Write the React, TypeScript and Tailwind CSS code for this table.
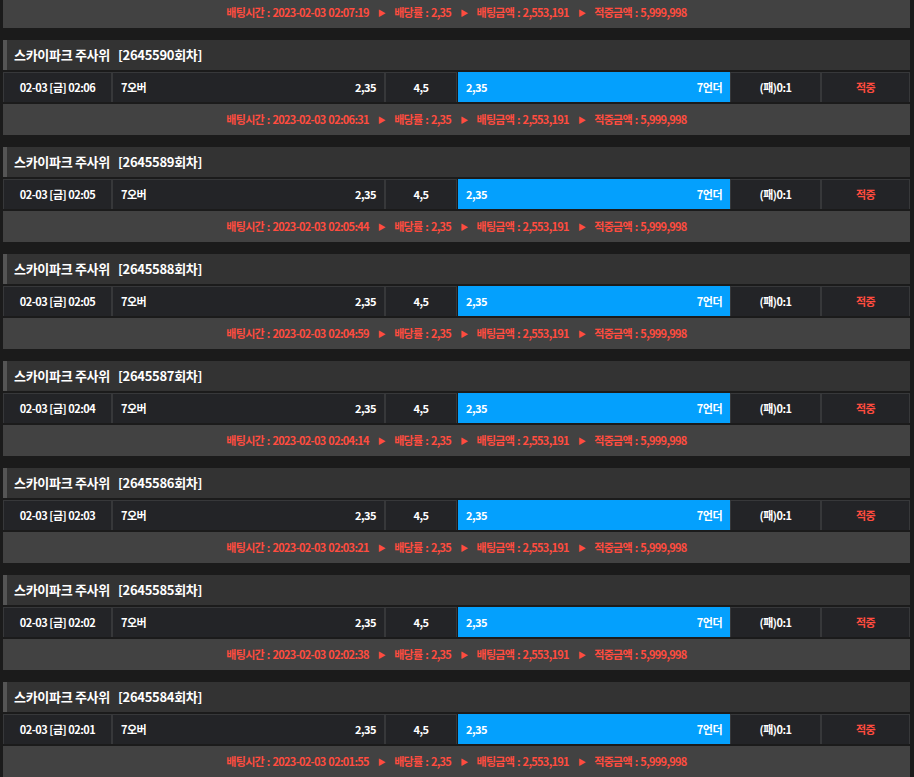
const rounds = [
  { no: "2645590", time: "02:06", bet: "02:06:31" },
  { no: "2645589", time: "02:05", bet: "02:05:44" },
  { no: "2645588", time: "02:05", bet: "02:04:59" },
  { no: "2645587", time: "02:04", bet: "02:04:14" },
  { no: "2645586", time: "02:03", bet: "02:03:21" },
  { no: "2645585", time: "02:02", bet: "02:02:38" },
  { no: "2645584", time: "02:01", bet: "02:01:55" },
]

function BetInfo({ bet, cut }: { bet: string; cut?: boolean }) {
  return (
    <div
      className={`flex items-center justify-center gap-[9px] bg-[#424242] text-[11px] font-bold tracking-[-0.7px] [word-spacing:1px] text-[#ff4c3f] ${
        cut ? "h-[28px] pb-[3px]" : "h-[31px]"
      }`}
    >
      <span>배팅시간 : 2023-02-03 {bet}</span>
      <span className="text-[8px]">▶</span>
      <span>배당률 : 2,35</span>
      <span className="text-[8px]">▶</span>
      <span>배팅금액 : 2,553,191</span>
      <span className="text-[8px]">▶</span>
      <span>적중금액 : 5,999,998</span>
    </div>
  )
}

function Round({ no, time, bet }: { no: string; time: string; bet: string }) {
  return (
    <div className="mt-[12px] flex flex-col gap-[2px]">
      <div className="flex h-[30px] items-center border-l-4 border-[#555555] bg-[#333333] pl-[7px] text-[13px] font-bold tracking-[-0.3px] text-white">
        <span>스카이파크 주사위</span>
        <span className="ml-[8px]">[{no}회차]</span>
      </div>
      <div className="flex h-[30px] text-[11px] font-bold tracking-[-0.5px] text-white">
        <div className="flex w-[109px] items-center justify-center border border-b-0 border-[#37383a] bg-[#232427]">
          02-03 [금] {time}
        </div>
        <div className="flex w-[273px] items-center justify-between border border-b-0 border-[#37383a] bg-[#232427] px-[8px]">
          <span>7오버</span>
          <span>2,35</span>
        </div>
        <div className="flex w-[72px] items-center justify-center border border-b-0 border-[#37383a] bg-[#232427]">
          4,5
        </div>
        <div className="ml-[1px] flex w-[272px] items-center justify-between bg-[#04a0fd] px-[8px]">
          <span>2,35</span>
          <span>7언더</span>
        </div>
        <div className="flex w-[91px] items-center justify-center border border-b-0 border-[#37383a] bg-[#232427]">
          (패)0:1
        </div>
        <div className="flex flex-1 items-center justify-center border border-b-0 border-[#37383a] bg-[#232427] text-[#ff4c3f]">
          적중
        </div>
      </div>
      <BetInfo bet={bet} />
    </div>
  )
}

export default function App() {
  return (
    <div
      className="min-h-screen bg-[#1b1b1b] pl-[3px] pr-[4px]"
      style={{ fontFamily: '"Noto Sans CJK KR", "Noto Sans", sans-serif' }}
    >
      <BetInfo bet="02:07:19" cut />
      {rounds.map((r) => (
        <Round key={r.no} {...r} />
      ))}
    </div>
  )
}
